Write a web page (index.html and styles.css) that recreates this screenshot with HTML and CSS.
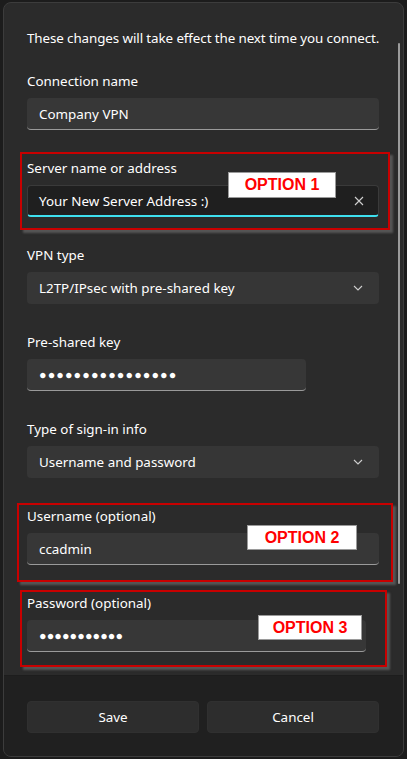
FILE: index.html
```html
<!DOCTYPE html>
<html lang="en">
<head>
  <meta charset="UTF-8">
  <meta name="viewport" content="width=device-width, initial-scale=1.0">
  <title>Edit VPN connection</title>

  <link rel="stylesheet" href="styles.css">

</head>
<body>

  <div class="dialog">
    <div class="content">
      <div class="scrollbar"></div>

      <p class="intro">These changes will take effect the next time you connect.</p>

      <div class="field">
        <div class="label">Connection name</div>
        <div class="textbox">Company VPN</div>
      </div>

      <div class="field">
        <div class="label">Server name or address</div>
        <div class="textbox focused">
          <span>Your New Server Address :)</span>
          <svg class="clear" width="10" height="10" viewBox="0 0 10 10">
            <path d="M1 1 L9 9 M9 1 L1 9" stroke="#cfcfcf" stroke-width="1.1" fill="none"/>
          </svg>
        </div>
        <div class="mark mark1"></div>
        <div class="tag tag1">OPTION 1</div>
      </div>

      <div class="field">
        <div class="label">VPN type</div>
        <div class="select">
          <span>L2TP/IPsec with pre-shared key</span>
          <svg class="chevron" width="10" height="6" viewBox="0 0 10 6">
            <path d="M1 1 L5 5 L9 1" stroke="#cfcfcf" stroke-width="1.1" fill="none"/>
          </svg>
        </div>
      </div>

      <div class="field">
        <div class="label">Pre-shared key</div>
        <div class="textbox key"><span class="dots">●●●●●●●●●●●●●●●●</span></div>
      </div>

      <div class="field">
        <div class="label">Type of sign-in info</div>
        <div class="select">
          <span>Username and password</span>
          <svg class="chevron" width="10" height="6" viewBox="0 0 10 6">
            <path d="M1 1 L5 5 L9 1" stroke="#cfcfcf" stroke-width="1.1" fill="none"/>
          </svg>
        </div>
      </div>

      <div class="field">
        <div class="label">Username (optional)</div>
        <div class="textbox">ccadmin</div>
        <div class="mark mark2"></div>
        <div class="tag tag2">OPTION 2</div>
      </div>

      <div class="field last">
        <div class="label">Password (optional)</div>
        <div class="textbox pass"><span class="dots">●●●●●●●●●●●</span></div>
        <div class="mark mark3"></div>
        <div class="tag tag3">OPTION 3</div>
      </div>
    </div>

    <div class="footer">
      <button class="btn">Save</button>
      <button class="btn">Cancel</button>
    </div>
  </div>

</body>
</html>
```

FILE: styles.css
```css
body{
 margin: 0;
 background-color: #1c1c1c;
 font-family: "Noto Sans", "Open Sans", sans-serif;
 font-size: 13.4px;
 color: #ffffff;
}
.dialog {
 width: 399px;
 height: 753px;
 margin: 2px 0 0 3px;
 border: 1px solid #3c3c3c;
 border-radius: 8px;
 background-color: #2b2b2b;
 display: flex;
 flex-direction: column;
 overflow: hidden;
}
.content {
 flex: 1;
 position: relative;
 padding: 25px 24px 0 23px;
}
.scrollbar {
 position: absolute;
 top: 40px;
 right: 3px;
 width: 2px;
 height: 541px;
 border-radius: 1px;
 background-color: #9b9b9b;
}
.intro {
 margin: 0 0 23px 0;
 line-height: 20px;
 white-space: nowrap;
 letter-spacing: -0.1px;
}
.field {
 position: relative;
 margin-bottom: 28px;
}
.field.last {
 margin-bottom: 0;
}
.label {
 line-height: 20px;
 margin-bottom: 7px;
}
.textbox, .select {
 box-sizing: border-box;
 height: 32px;
 width: 352px;
 padding: 0 12px;
 border-radius: 4px;
 background-color: #373737;
 display: flex;
 align-items: center;
 justify-content: space-between;
}
.textbox {
 border-bottom: 1px solid #9a9a9a;
}
.textbox.focused {
 background-color: #1f1f1f;
 border: 1px solid #3a3a3a;
 border-bottom: 2px solid #3ee0ef;
 padding-left: 11px;
}
.select {
 background-color: #363636;
}
.key {
 width: 279px;
}
.pass {
 width: 339px;
}
.dots {
 font-size: 12.5px;
 letter-spacing: 0.1px;
}
.key .dots {
 letter-spacing: 1.1px;
}
.clear {
 margin-right: 2px;
}
.chevron {
 margin-right: 4px;
}
.mark {
 position: absolute;
 border: 2px solid #c80000;
 box-shadow: 3px 3px 2px #555555;
}
.mark1 {
 top: -6px;
 left: -7px;
 width: 366px;
 height: 74px;
}
.mark2 {
 top: -3px;
 left: -10px;
 width: 372px;
 height: 75px;
}
.mark3 {
 top: -3px;
 left: -7px;
 width: 363px;
 height: 73px;
}
.tag {
 position: absolute;
 box-sizing: border-box;
 height: 26px;
 background-color: #ffffff;
 border: 1px solid #9a9a9a;
 color: #ff0000;
 font-family: "Liberation Sans", Arial, sans-serif;
 font-weight: 700;
 font-size: 16px;
 display: flex;
 align-items: center;
 justify-content: center;
}
.tag1 {
 top: 14px;
 left: 201px;
 width: 108px;
}
.tag2 {
 top: 19px;
 left: 220px;
 width: 110px;
 height: 25px;
}
.tag3 {
 top: 22px;
 left: 231px;
 width: 104px;
 height: 25px;
}
.footer {
 background-color: #202020;
 border-top: 1px solid #1d1d1d;
 padding: 25px 24px 23px 23px;
 display: grid;
 grid-template-columns: 1fr 1fr;
 gap: 8px;
}
.btn {
 height: 32px;
 border: 1px solid #303030;
 border-radius: 4px;
 background-color: #2d2d2d;
 color: #ffffff;
 font-family: "Noto Sans", "Open Sans", sans-serif;
 font-size: 13.4px;
}
```
